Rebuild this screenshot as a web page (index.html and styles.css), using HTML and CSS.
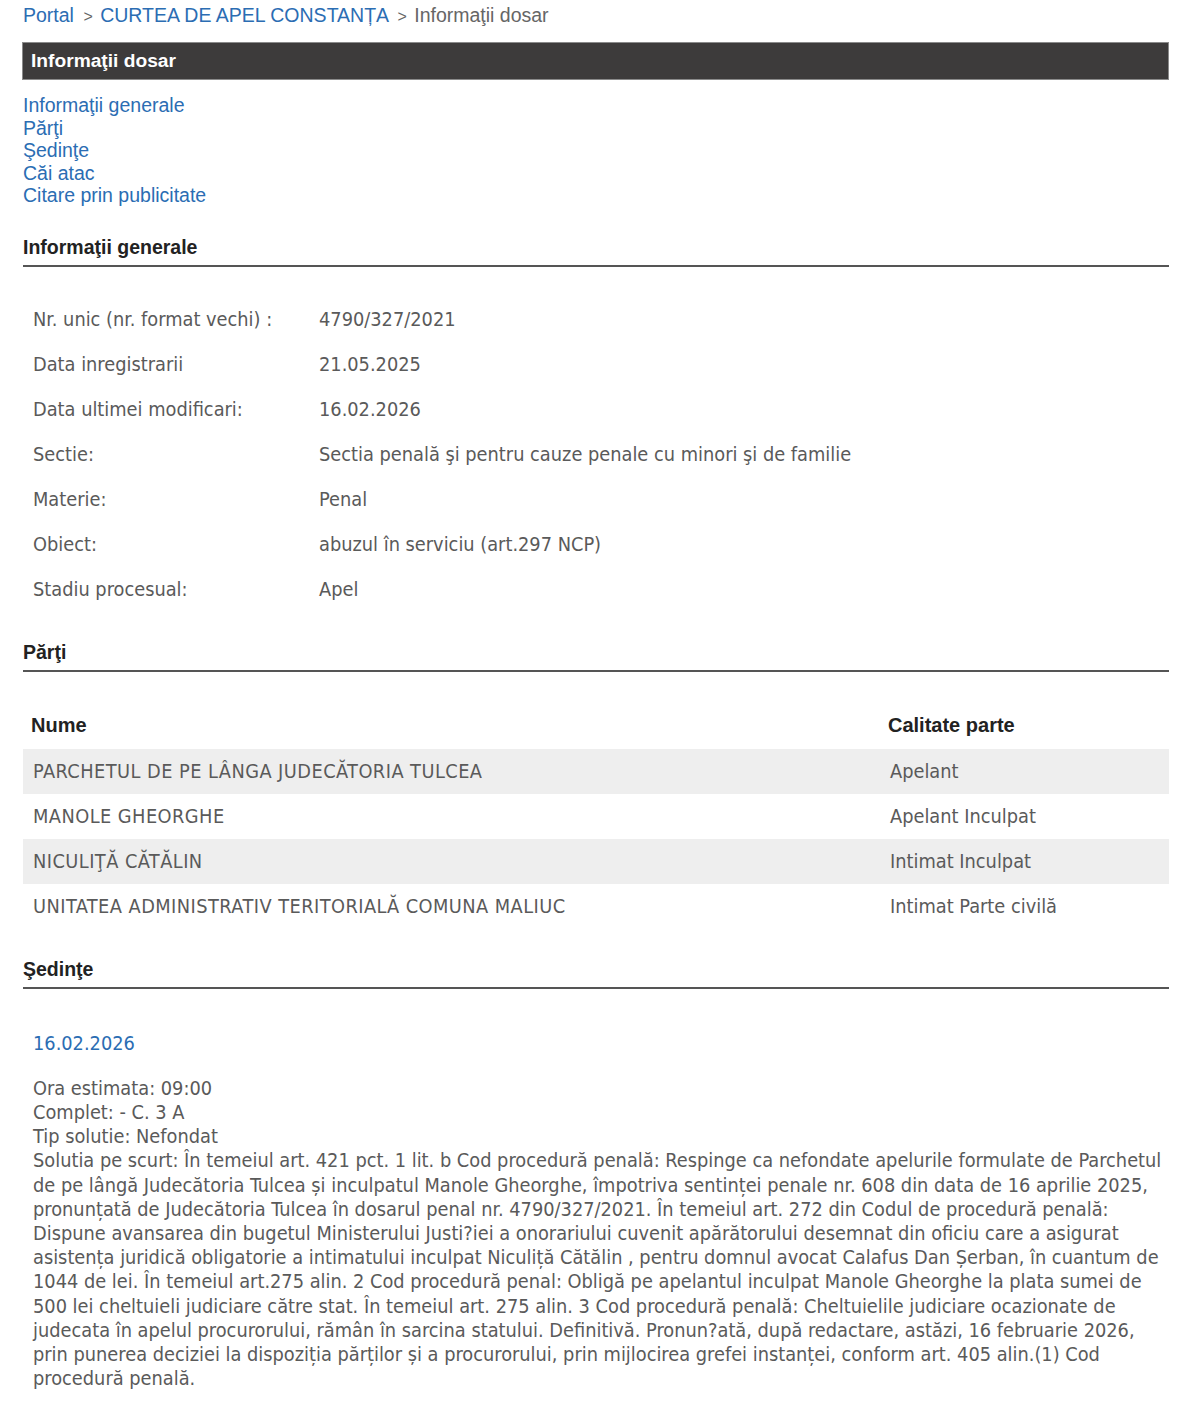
FILE: index.html
```html
<!DOCTYPE html>
<html lang="ro">

<head>
    <meta charset="utf-8">
    <title>Informaţii dosar</title>
    <link rel="stylesheet" href="styles.css">
</head>

<body>
    <div class="page">

        <div class="breadcrumb">
            <a href="#">Portal</a>
            <span class="sep">&gt;</span>
            <a href="#">CURTEA DE APEL CONSTANȚA</a>
            <span class="sep">&gt;</span>
            <span class="current">Informaţii dosar</span>
        </div>

        <div class="title-bar">Informaţii dosar</div>

        <ul class="anchors">
            <li><a href="#generale">Informaţii generale</a></li>
            <li><a href="#parti">Părţi</a></li>
            <li><a href="#sedinte">Şedinţe</a></li>
            <li><a href="#cai-atac">Căi atac</a></li>
            <li><a href="#citare">Citare prin publicitate</a></li>
        </ul>

        <h2 class="section-title" id="generale">Informaţii generale</h2>
        <table class="info-table">
            <tr>
                <td class="label">Nr. unic (nr. format vechi) :</td>
                <td>4790/327/2021</td>
            </tr>
            <tr>
                <td class="label">Data inregistrarii</td>
                <td>21.05.2025</td>
            </tr>
            <tr>
                <td class="label">Data ultimei modificari:</td>
                <td>16.02.2026</td>
            </tr>
            <tr>
                <td class="label">Sectie:</td>
                <td>Sectia penală şi pentru cauze penale cu minori şi de familie</td>
            </tr>
            <tr>
                <td class="label">Materie:</td>
                <td>Penal</td>
            </tr>
            <tr>
                <td class="label">Obiect:</td>
                <td>abuzul în serviciu (art.297 NCP)</td>
            </tr>
            <tr>
                <td class="label">Stadiu procesual:</td>
                <td>Apel</td>
            </tr>
        </table>

        <h2 class="section-title" id="parti">Părţi</h2>
        <table class="parti-table">
            <thead>
                <tr>
                    <th class="col-nume">Nume</th>
                    <th>Calitate parte</th>
                </tr>
            </thead>
            <tbody>
                <tr class="odd">
                    <td class="nume">PARCHETUL DE PE LÂNGA JUDECĂTORIA TULCEA</td>
                    <td>Apelant</td>
                </tr>
                <tr>
                    <td class="nume">MANOLE GHEORGHE</td>
                    <td>Apelant Inculpat</td>
                </tr>
                <tr class="odd">
                    <td class="nume">NICULIŢĂ CĂTĂLIN</td>
                    <td>Intimat Inculpat</td>
                </tr>
                <tr>
                    <td class="nume">UNITATEA ADMINISTRATIV TERITORIALĂ COMUNA MALIUC</td>
                    <td>Intimat Parte civilă</td>
                </tr>
            </tbody>
        </table>

        <h2 class="section-title" id="sedinte">Şedinţe</h2>
        <div class="sedinta">
            <div class="sedinta-date">16.02.2026</div>
            <div class="sedinta-info">
                Ora estimata: 09:00<br>
                Complet: - C. 3 A<br>
                Tip solutie: Nefondat<br>
                Solutia pe scurt: În temeiul art. 421 pct. 1 lit. b Cod procedură penală: Respinge ca nefondate apelurile formulate de Parchetul de pe lângă Judecătoria Tulcea și inculpatul Manole Gheorghe, împotriva sentinței penale nr. 608 din data de 16 aprilie 2025, pronunțată de Judecătoria Tulcea în dosarul penal nr. 4790/327/2021. În temeiul art. 272 din Codul de procedură penală: Dispune avansarea din bugetul Ministerului Justi?iei a onorariului cuvenit apărătorului desemnat din oficiu care a asigurat asistența juridică obligatorie a intimatului inculpat Niculiță Cătălin , pentru domnul avocat Calafus Dan Șerban, în cuantum de 1044 de lei. În temeiul art.275 alin. 2 Cod procedură penal: Obligă pe apelantul inculpat Manole Gheorghe la plata sumei de 500 lei cheltuieli judiciare către stat. În temeiul art. 275 alin. 3 Cod procedură penală: Cheltuielile judiciare ocazionate de judecata în apelul procurorului, rămân în sarcina statului. Definitivă. Pronun?ată, după redactare, astăzi, 16 februarie 2026, prin punerea deciziei la dispoziția părților și a procurorului, prin mijlocirea grefei instanței, conform art. 405 alin.(1) Cod procedură penală.
            </div>
        </div>

    </div>
</body>

</html>
```

FILE: styles.css
```css
body {
    margin: 0;
    background-color: #ffffff;
    font-family: "Liberation Sans", Arial, sans-serif;
    font-size: 19.5px;
    color: #555555;
}

.page {
    padding: 3px 31px 40px 23px;
}

a {
    color: #2b6db3;
    text-decoration: none;
}

.breadcrumb {
    line-height: 24px;
    color: #666666;
}

.breadcrumb .sep {
    font-size: 16px;
    margin: 0 2px 0 4px;
}

.title-bar {
    margin: 13px 0 0 -1px;
    height: 36px;
    line-height: 35px;
    padding-left: 8px;
    background-color: #3d3b3b;
    border: 1px solid #8a8a8a;
    color: #ffffff;
    font-weight: bold;
    font-size: 19.2px;
}

.anchors {
    list-style: none;
    margin: 14px 0 0 0;
    padding: 0;
}

.anchors li {
    line-height: 22.5px;
}

.section-title {
    margin: 29px 0 0 0;
    padding-bottom: 6px;
    border-bottom: 2px solid #555555;
    font-size: 19.5px;
    line-height: 23px;
    color: #222222;
}

.info-table,
.parti-table {
    width: 100%;
    border-collapse: collapse;
    font-family: "DejaVu Sans Condensed", "DejaVu Sans", sans-serif;
    font-stretch: condensed;
    font-size: 19.8px;
    color: #5a5a5a;
}

.info-table {
    margin-top: 30px;
}

.info-table td {
    height: 45px;
    padding: 0 10px;
}

.info-table .label {
    width: 266px;
}

.parti-table {
    margin-top: 30px;
    table-layout: fixed;
}

.parti-table th {
    height: 47px;
    padding: 0 8px;
    text-align: left;
    font-family: "Liberation Sans", Arial, sans-serif;
    font-stretch: normal;
    font-size: 20px;
    color: #222222;
}

.parti-table .col-nume {
    width: 841px;
}

.parti-table td {
    height: 45px;
    padding: 0 10px;
}

.parti-table td.nume {
    letter-spacing: 0.45px;
}

.parti-table tr.odd td {
    background-color: #eeeeee;
}

.sedinta {
    padding: 0 0 0 10px;
    font-family: "DejaVu Sans Condensed", "DejaVu Sans", sans-serif;
    font-stretch: condensed;
    font-size: 19.8px;
    line-height: 24.2px;
    color: #5a5a5a;
}

.sedinta-date {
    margin-top: 43px;
    color: #2b6db3;
}

.sedinta-info {
    margin-top: 21px;
}
```
